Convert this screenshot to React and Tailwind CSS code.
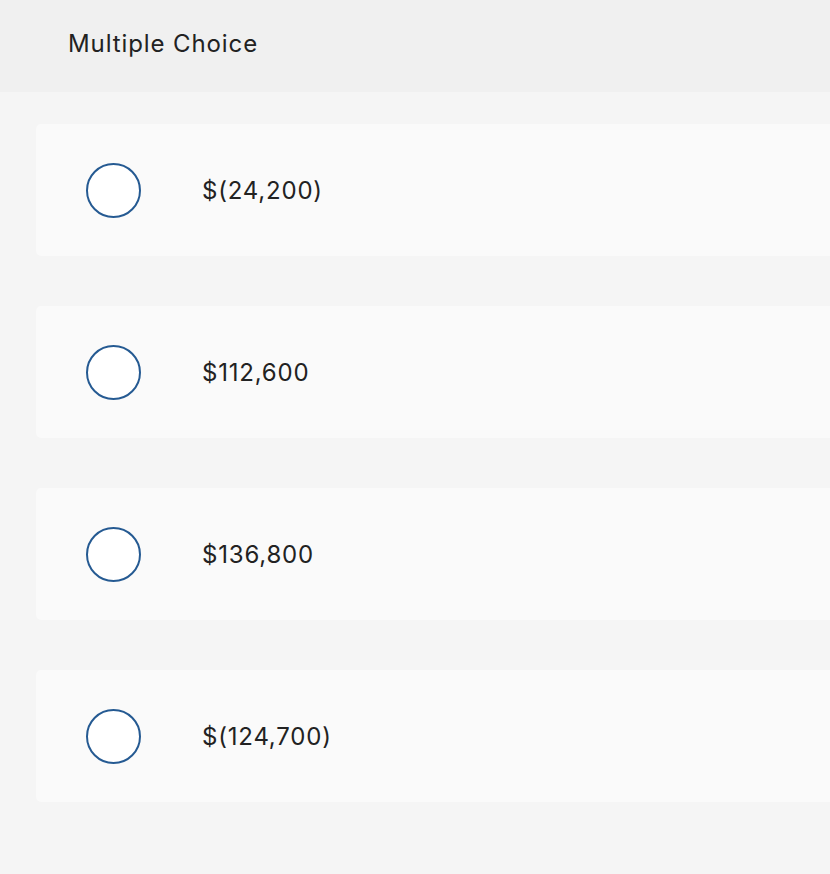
const options = ['$(24,200)', '$112,600', '$136,800', '$(124,700)'];

export default function App() {
  return (
    <div className="h-[874px] w-full overflow-hidden bg-[#f5f5f5]" style={{ fontFamily: 'Inter, "Open Sans", sans-serif' }}>
      <div className="h-[92px] bg-[#f0f0f0] flex items-center pl-[68px]">
        <h2 className="text-[24px] tracking-[0.9px] text-[#222] pb-[4px]">Multiple Choice</h2>
      </div>
      <div className="flex flex-col gap-[50px] pt-[32px] pl-[36px]">
        {options.map((opt) => (
          <label
            key={opt}
            className="h-[132px] -mr-6 bg-[#fafafa] rounded-[5px] flex items-center pl-[50px] cursor-pointer"
          >
            <span className="w-[55px] h-[55px] rounded-full border-2 border-[#255a92] bg-white shrink-0" />
            <span className="ml-[61px] pt-[2px] text-[24px] tracking-[0.8px] text-[#222]">{opt}</span>
          </label>
        ))}
      </div>
    </div>
  );
}
